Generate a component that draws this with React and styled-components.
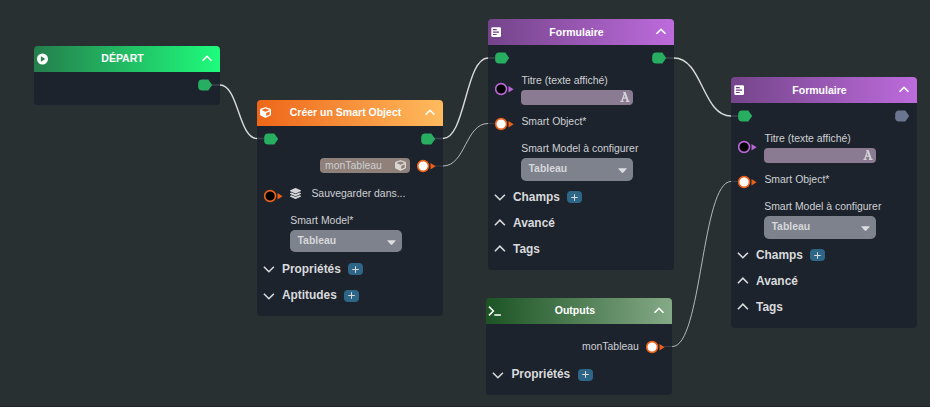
import React from "react";
import styled, { createGlobalStyle, css } from "styled-components";
import { FaCube, FaLayerGroup } from "react-icons/fa";

const GlobalStyle = createGlobalStyle`
  *, *::before, *::after { box-sizing: border-box; }
  body { margin: 0; background: #293031; overflow: hidden; }
`;

const GREEN = "#27ae60";
const ORANGE = "#ec6117";
const PURPLE = "#b967d6";

const Canvas = styled.main`
  position: relative;
  width: 930px;
  height: 407px;
  overflow: hidden;
  background: #293031;
  border-bottom: 1px solid #1f2427;
  font-family: "Liberation Sans", Arial, sans-serif;
  font-size: 10.45px;
  line-height: 1;
  color: #cdd0d3;
`;

const Wires = styled.svg`
  position: absolute;
  inset: 0;
  fill: none;
  stroke: #d9dbdb;
`;

const Node = styled.section`
  position: absolute;
  left: ${(p) => p.$x}px;
  top: ${(p) => p.$y}px;
  width: 186px;
  height: ${(p) => p.$h}px;
  display: flex;
  flex-direction: column;
  border-radius: 4px;
  overflow: hidden;
`;

const Header = styled.header`
  flex: none;
  height: 26px;
  display: grid;
  grid-template-columns: 16px 1fr 16px;
  align-items: center;
  padding: 0 3px 0 1px;
  background: linear-gradient(90deg, ${(p) => p.$from}, ${(p) => p.$to});
  color: #fff;
`;

const Title = styled.h2`
  margin: 0;
  padding: 0 7px 1px 0;
  font-size: 10.5px;
  font-weight: 700;
  text-align: center;
  white-space: nowrap;
`;

const HeaderCube = styled(FaCube)`
  margin-left: 1.6px;
  font-size: 11px;
`;

const Body = styled.div`
  flex: 1;
  display: flex;
  flex-direction: column;
  background: rgba(27, 33, 45, 0.82);
`;

const Row = styled.div`
  flex: none;
  height: ${(p) => p.$h}px;
  display: flex;
  align-items: center;
  padding: ${(p) => p.$top || 0}px 7px 0;
  justify-content: ${(p) => (p.$end ? "flex-end" : "space-between")};
`;

const InputRow = styled.div`
  flex: none;
  height: ${(p) => p.$h}px;
  display: grid;
  grid-template-columns: 26.4px 1fr;
  align-items: center;
  padding: 0 0 0 7px;
`;

const Field = styled.div`
  display: flex;
  flex-direction: column;
  gap: 3px;
  padding-bottom: ${(p) => p.$lift || 0}px;
`;

const Label = styled.span`
  white-space: nowrap;
  line-height: 13px;
`;

const IconLabel = styled.div`
  display: flex;
  align-items: center;
  gap: 10.4px;
  padding-bottom: 6px;

  svg {
    margin-left: -0.4px;
    font-size: 11px;
    color: #d3d5d7;
  }
`;

const valueBox = css`
  display: flex;
  align-items: center;
  height: 15px;
  border-radius: 4px;
`;

const TextValue = styled.div`
  ${valueBox}
  width: 112px;
  justify-content: flex-end;
  padding-right: 3px;
  background: #8b7b92;
`;

const Chip = styled.div`
  ${valueBox}
  width: 90px;
  margin-right: 7px;
  justify-content: space-between;
  padding: 0 4px 0 5px;
  background: #8f8079;

  svg {
    font-size: 11px;
    color: #d8d5d3;
  }
`;

const SelectBlock = styled.div`
  flex: none;
  height: ${(p) => p.$h}px;
  display: flex;
  flex-direction: column;
  gap: 3px;
  padding: ${(p) => p.$top || 0}px 0 0 33.2px;
`;

const Select = styled.div`
  display: flex;
  align-items: center;
  justify-content: space-between;
  width: 112px;
  height: 22.4px;
  padding: 0 6.5px 0 7.3px;
  border-radius: 5px;
  background: #7e828c;
  color: #d6d7da;
  font-weight: 700;
`;

const Section = styled.div`
  flex: none;
  height: 26px;
  display: flex;
  align-items: center;
  padding-left: 6px;
  margin-bottom: ${(p) => p.$gap || 0}px;
  font-size: 11.9px;
  font-weight: 700;
  color: #d8dadc;
`;

const SectionName = styled.span`
  margin: 0 7.4px 0 7px;
  padding-top: 1px;
`;

const AddButton = styled.button`
  display: flex;
  align-items: center;
  justify-content: center;
  width: 15px;
  height: 12px;
  padding: 0;
  border: 0;
  border-radius: 4px;
  background: #2d6687;
  color: #d8dadc;
`;

const OutputName = styled(Label)`
  margin-right: 7.5px;
`;

function Chevron({ up, color = "#d8dadc" }) {
  return (
    <svg width="12" height="12" viewBox="0 0 12 12" fill="none" stroke={color} strokeWidth="1.6">
      <path d={up ? "M.9 8.200 5.900 3.200l5 5" : "M.9 3.700 5.900 8.700l5-5"} />
    </svg>
  );
}

function HeaderChevron() {
  return (
    <svg width="12" height="12" viewBox="0 0 12 12" fill="none" stroke="#fff" strokeWidth="1.6">
      <path d="M1.500 7.800 6 3.300l4.500 4.500" />
    </svg>
  );
}

function FlowPort({ color = GREEN }) {
  return (
    <svg width="15" height="12" viewBox="0 0 15 12">
      <path d="M4 .5h6.300L14.200 6l-3.900 5.500H4Q.8 11.400.2 8.200V3.800Q.8.6 4 .5Z" fill={color} />
    </svg>
  );
}

function DataPort({ color = ORANGE, filled }) {
  return (
    <svg width="19" height="14" viewBox="0 0 19 14">
      <circle cx="6.100" cy="7" r="5.400" fill={filled ? "#fff" : "#000"} stroke={color} strokeWidth="1.600" />
      <path d="M13.500 4v6.500L18.600 7.200Z" fill={color} />
    </svg>
  );
}

function PlayIcon() {
  return (
    <svg width="16" height="12" viewBox="0 0 16 12">
      <circle cx="7.500" cy="6" r="5.500" fill="#fff" />
      <path d="M5.900 3.300v5.400L10.200 6Z" fill="#257e4c" />
    </svg>
  );
}

function FormIcon() {
  return (
    <svg width="16" height="12" viewBox="0 0 16 12">
      <rect x="2.300" y="1.200" width="9.700" height="9.700" rx="1.200" fill="#fff" />
      <path d="M4 3.700h3.700M4 6.100h6M4 8.500h3.700" stroke="#713f82" strokeWidth="1.200" />
    </svg>
  );
}

function TerminalIcon() {
  return (
    <svg width="16" height="12" viewBox="0 0 16 12" fill="none" stroke="#fff" strokeWidth="1.500">
      <path d="M2 1.600 6.400 6 2 10.400M7.300 9.900h6.600" />
    </svg>
  );
}

function TextTypeIcon() {
  return (
    <svg width="10" height="10" viewBox="0 0 10 10" fill="none" stroke="#d3d3d7">
      <path d="M1.900 9 4.600 1.200" strokeWidth="1.200" />
      <path d="M4.800.7 7.800 9" strokeWidth="2" />
      <path d="M3 6.200h4M.4 9.300h3.200M5.900 9.300h3.700M3.200.7h2.400" strokeWidth="1.200" />
    </svg>
  );
}

function Caret() {
  return (
    <svg width="9" height="12" viewBox="0 0 9 12">
      <path d="M.9 5.200h7.200q.9.200.4.900L5.300 9.600q-.8.800-1.600 0L.5 6.100q-.5-.7.4-.9Z" fill="#dcdde0" />
    </svg>
  );
}

function Plus() {
  return (
    <svg width="7" height="7" viewBox="0 0 7 7" stroke="currentColor">
      <path d="M3.500.2v6.600M.2 3.500h6.600" />
    </svg>
  );
}

function NodeHeader({ from, to, icon, children }) {
  return (
    <Header $from={from} $to={to}>
      {icon}
      <Title>{children}</Title>
      <HeaderChevron />
    </Header>
  );
}

function Group({ name, open, addable, gap }) {
  return (
    <Section $gap={gap}>
      <Chevron up={!open} />
      <SectionName>{name}</SectionName>
      {addable && (
        <AddButton aria-label={name}>
          <Plus />
        </AddButton>
      )}
    </Section>
  );
}

function ModelSelect({ label, h, top }) {
  return (
    <SelectBlock $h={h} $top={top}>
      <Label>{label}</Label>
      <Select>
        Tableau
        <Caret />
      </Select>
    </SelectBlock>
  );
}

function FormNode({ x, y, outColor }) {
  return (
    <Node $x={x} $y={y} $h={250.4}>
      <NodeHeader from="#74448a" to="#bd6bdc" icon={<FormIcon />}>
        Formulaire
      </NodeHeader>
      <Body>
        <Row $h={26}>
          <FlowPort />
          <FlowPort color={outColor} />
        </Row>
        <InputRow $h={36}>
          <DataPort color={PURPLE} />
          <Field>
            <Label>Titre (texte affiché)</Label>
            <TextValue>
              <TextTypeIcon />
            </TextValue>
          </Field>
        </InputRow>
        <InputRow $h={33}>
          <DataPort filled />
          <Field $lift={4.5}>
            <Label>Smart Object*</Label>
          </Field>
        </InputRow>
        <ModelSelect label="Smart Model à configurer" h={43.8} top={1.8} />
        <Group name="Champs" open addable />
        <Group name="Avancé" />
        <Group name="Tags" />
      </Body>
    </Node>
  );
}

export default function App() {
  return (
    <>
      <GlobalStyle />
      <Canvas>
        <Wires width="930" height="407" viewBox="0 0 930 407">
          <path d="M211 85H220C238.500 85 238.500 138.500 257 138.500H264" strokeWidth="1.400" />
          <path d="M434 138.500H443C465.500 138.500 465.500 58 488 58H496" strokeWidth="1.400" />
          <path d="M665 58H674C702.500 58 702.500 116 731 116H739" strokeWidth="1.400" />
          <path d="M434 166H443C465.500 166 465.500 123.500 488 123.500H496" strokeWidth=".8" />
          <path d="M664 346.500H672.500C701.700 346.500 701.700 181.500 731 181.500H738" strokeWidth=".8" />
        </Wires>

        <Node $x={34} $y={46} $h={59}>
          <NodeHeader from="#257e4c" to="#1efc7c" icon={<PlayIcon />}>
            DÉPART
          </NodeHeader>
          <Body>
            <Row $h={26} $end>
              <FlowPort />
            </Row>
          </Body>
        </Node>

        <Node $x={257} $y={99.8} $h={216}>
          <NodeHeader from="#ee6618" to="#ffbb5e" icon={<HeaderCube />}>
            Créer un Smart Object
          </NodeHeader>
          <Body>
            <Row $h={26}>
              <FlowPort />
              <FlowPort />
            </Row>
            <Row $h={28} $end>
              <Chip>
                <Label>monTableau</Label>
                <FaCube />
              </Chip>
              <DataPort filled />
            </Row>
            <InputRow $h={33}>
              <DataPort />
              <IconLabel>
                <FaLayerGroup />
                <Label>Sauvegarder dans...</Label>
              </IconLabel>
            </InputRow>
            <ModelSelect label="Smart Model*" h={43.3} top={1.2} />
            <Group name="Propriétés" open addable gap={0.6} />
            <Group name="Aptitudes" open addable />
          </Body>
        </Node>

        <FormNode x={488} y={19.4} outColor={GREEN} />
        <FormNode x={731} y={77.4} outColor="#6b7490" />

        <Node $x={486.4} $y={298} $h={97}>
          <NodeHeader from="#1c5424" to="#84a986" icon={<TerminalIcon />}>
            Outputs
          </NodeHeader>
          <Body>
            <Row $h={37.5} $top={8} $end>
              <OutputName>monTableau</OutputName>
              <DataPort filled />
            </Row>
            <Group name="Propriétés" open addable />
          </Body>
        </Node>
      </Canvas>
    </>
  );
}
